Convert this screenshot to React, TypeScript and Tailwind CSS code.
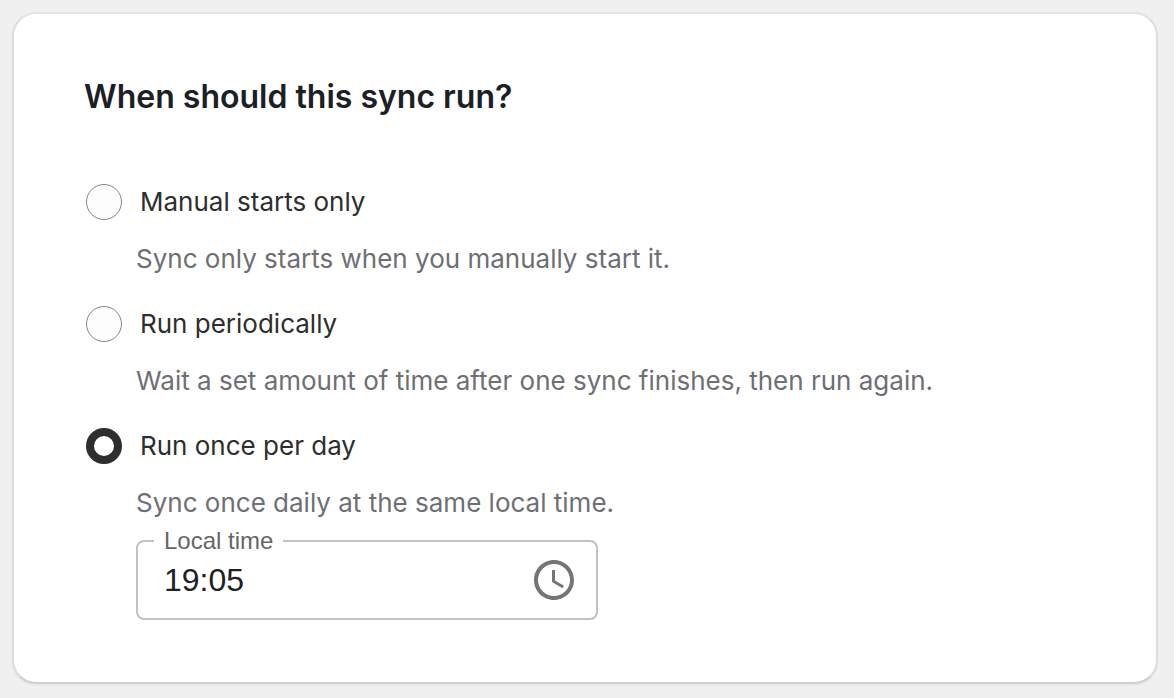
import React, { useState } from 'react';

type Schedule = 'manual' | 'periodic' | 'daily';

const options: { value: Schedule; label: string; description: string }[] = [
  { value: 'manual', label: 'Manual starts only', description: 'Sync only starts when you manually start it.' },
  {
    value: 'periodic',
    label: 'Run periodically',
    description: 'Wait a set amount of time after one sync finishes, then run again.'
  },
  { value: 'daily', label: 'Run once per day', description: 'Sync once daily at the same local time.' }
];

const LocalTimeField: React.FC = () => {
  const [time, setTime] = useState('19:05');

  return (
    <fieldset className="w-[462px] max-w-full min-w-0 rounded-lg border-2 border-[#c1c1c1] pl-4 pr-[18px] pb-[14px] font-['Liberation_Sans',Arial,sans-serif]">
      <legend className="px-[10px] text-2xl leading-[22px] text-[#666666]">
        <label htmlFor="local-time">Local time</label>
      </legend>
      <div className="flex items-center justify-between pl-[10px] pt-1">
        <input
          id="local-time"
          type="text"
          value={time}
          onChange={(e) => setTime(e.target.value)}
          className="min-w-0 flex-1 bg-transparent text-[32px] leading-10 text-[#212121] outline-none"
        />
        <button type="button" aria-label="Choose time">
          <svg className="size-12" viewBox="0 0 24 24" fill="#757575">
            <path d="M11.99 2C6.47 2 2 6.48 2 12s4.47 10 9.99 10C17.52 22 22 17.52 22 12S17.52 2 11.99 2zM12 20c-4.42 0-8-3.58-8-8s3.58-8 8-8 8 3.58 8 8-3.58 8-8 8z" />
            <path d="M12.5 7H11v6l5.25 3.15.75-1.23-4.5-2.67z" />
          </svg>
        </button>
      </div>
    </fieldset>
  );
};

const App: React.FC = () => {
  const [schedule, setSchedule] = useState<Schedule>('daily');

  return (
    <main className="min-h-screen bg-[#f0f0f0] pl-3 pr-4 pt-3 pb-3 font-['Inter',sans-serif]">
      <section className="rounded-3xl border-2 border-x-[#dcdcdc] border-t-[#e3e3e3] border-b-[#d0d0d0] bg-white px-[70px] pt-[63px] pb-[62px] shadow-[0_2px_0_#e8e8e8]">
        <h1 className="text-[32px] leading-10 font-semibold text-[#1b2026]">When should this sync run?</h1>

        <div role="radiogroup" aria-label="When should this sync run?" className="mt-[65px] space-y-7">
          {options.map((option) => (
            <div key={option.value}>
              <label className="flex items-center gap-[18px] pl-[2px] text-[26px] leading-10 text-[#2e2e2e]">
                <input
                  type="radio"
                  name="schedule"
                  value={option.value}
                  checked={schedule === option.value}
                  onChange={() => setSchedule(option.value)}
                  className="size-9 shrink-0 appearance-none rounded-full border border-[#858585] bg-[#fdfdfd] checked:border-8 checked:border-[#2e2e2e] checked:bg-white"
                />
                {option.label}
              </label>
              <div className="mt-5 pl-[52px]">
                <p className="text-[26px] leading-[34px] text-[#6d6f74]">{option.description}</p>
                {option.value === 'daily' && schedule === 'daily' && (
                  <div className="mt-[10px]">
                    <LocalTimeField />
                  </div>
                )}
              </div>
            </div>
          ))}
        </div>
      </section>
    </main>
  );
};

export default App;
